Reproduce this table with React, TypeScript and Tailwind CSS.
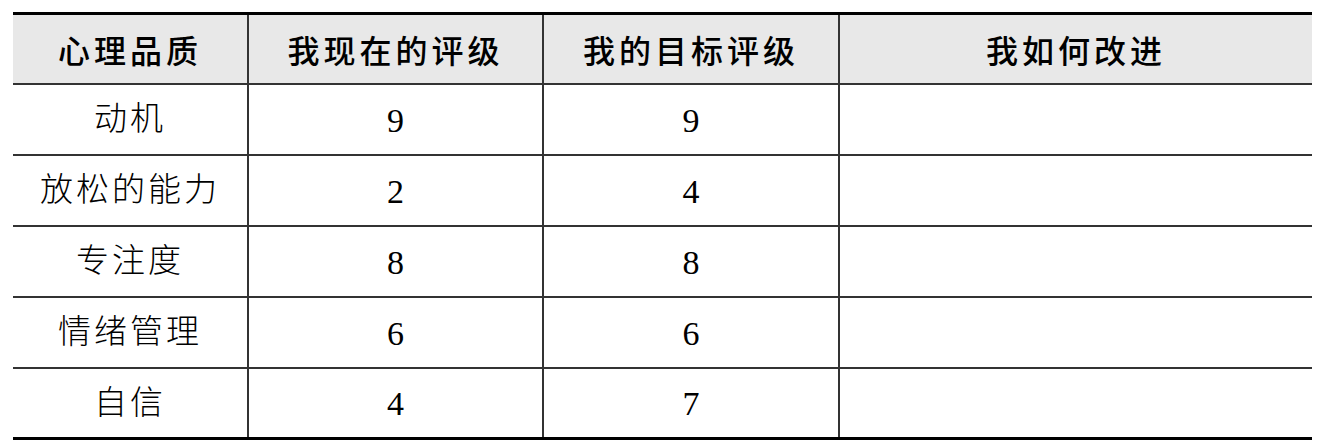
const rows = [
  { name: "动机", now: "9", goal: "9" },
  { name: "放松的能力", now: "2", goal: "4" },
  { name: "专注度", now: "8", goal: "8" },
  { name: "情绪管理", now: "6", goal: "6" },
  { name: "自信", now: "4", goal: "7" },
];

const headers = ["心理品质", "我现在的评级", "我的目标评级", "我如何改进"];

const bodyFont = { fontFamily: '"Liberation Serif", "Noto Sans CJK SC", serif' };

export default function App() {
  return (
    <div className="w-[1320px] h-[446px] bg-white pt-[12px] pl-[13px]">
      <table className="border-collapse table-fixed w-[1299px] text-black">
        <colgroup>
          <col className="w-[235px]" />
          <col className="w-[295px]" />
          <col className="w-[296px]" />
          <col className="w-[473px]" />
        </colgroup>
        <thead>
          <tr className="h-[70px] bg-[#e8e8e8] border-t-[3px] border-t-black border-b-[2px] border-b-[#333]">
            {headers.map((h, i) => (
              <th
                key={h}
                className={`p-0 text-center text-[32px] font-medium tracking-[4px] ${i > 0 ? "border-l-[2px] border-l-[#333]" : ""}`}
                style={{ fontFamily: '"Noto Sans CJK SC", sans-serif' }}
              >
                {h}
              </th>
            ))}
          </tr>
        </thead>
        <tbody>
          {rows.map((r, idx) => (
            <tr
              key={r.name}
              className={`h-[71px] ${idx === rows.length - 1 ? "border-b-[3px] border-b-black" : "border-b-[2px] border-b-[#333]"}`}
            >
              <td className="p-0 pt-[2px] text-center text-[33px] font-light tracking-[3px]" style={bodyFont}>
                {r.name}
              </td>
              <td className="p-0 pt-[2px] text-center text-[34px] border-l-[2px] border-l-[#333]" style={bodyFont}>
                {r.now}
              </td>
              <td className="p-0 pt-[2px] text-center text-[34px] border-l-[2px] border-l-[#333]" style={bodyFont}>
                {r.goal}
              </td>
              <td className="p-0 border-l-[2px] border-l-[#333]"></td>
            </tr>
          ))}
        </tbody>
      </table>
    </div>
  );
}
